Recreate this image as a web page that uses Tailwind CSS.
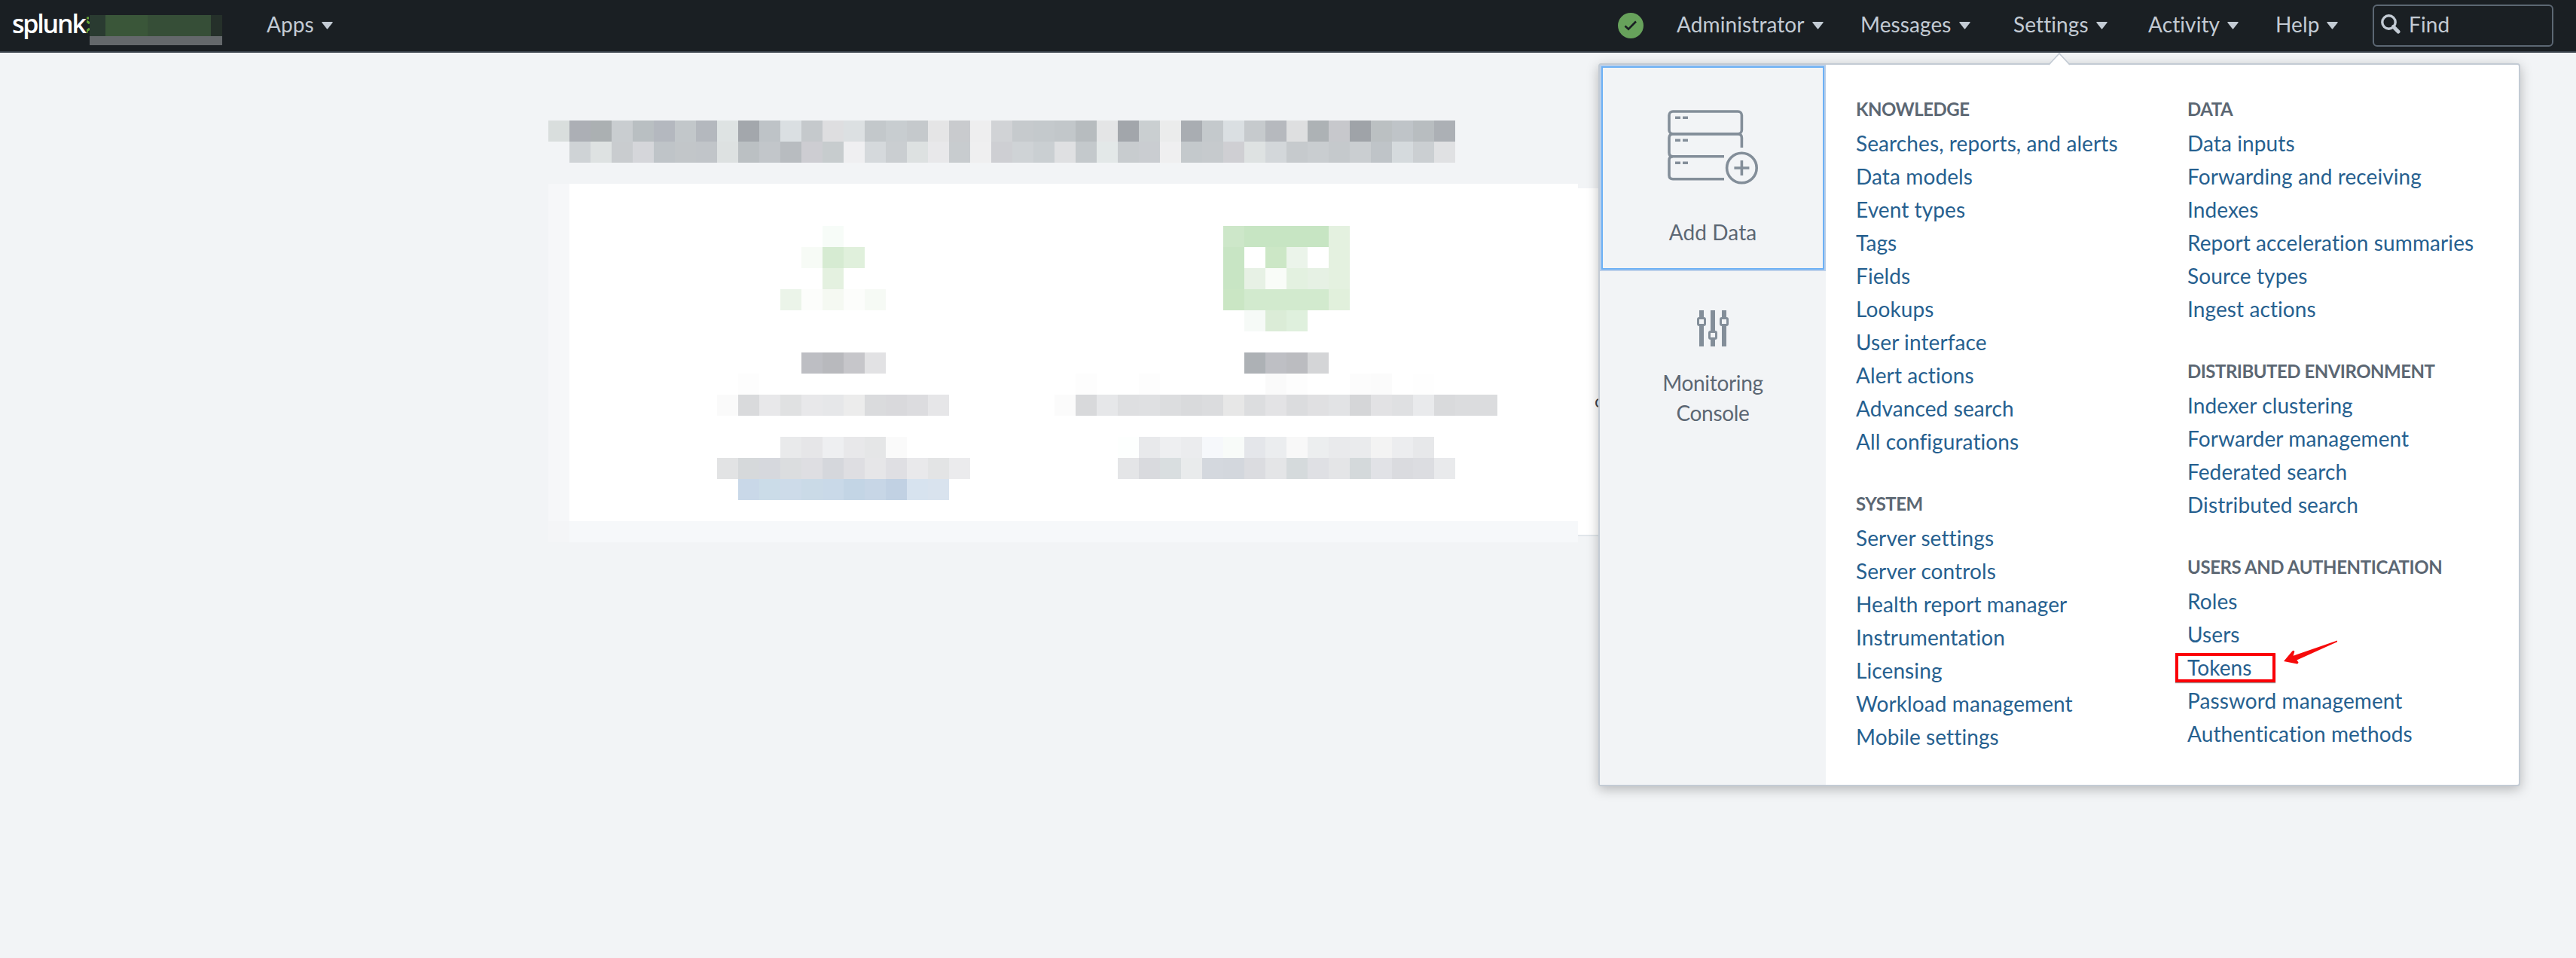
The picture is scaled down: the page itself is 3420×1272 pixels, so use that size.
<!DOCTYPE html>
<html lang="en">
<head>
  <meta charset="UTF-8" />
  <meta name="viewport" content="width=device-width, initial-scale=1.0" />
  <title>Splunk</title>
  <script src="https://cdn.jsdelivr.net/npm/@tailwindcss/browser@4"></script>
</head>
<body class="relative h-[1272px] overflow-hidden bg-[#f2f4f6] font-['Lato','Liberation_Sans',sans-serif] text-[28px] tracking-[0.1px] [font-variant-ligatures:none]">

  <!-- Top bar -->
  <header class="flex h-[70px] items-center border-b-2 border-[#3c444d] bg-[#1a1f23] pl-4 leading-[64px] text-[#c3cbd4]">
    <div class="flex w-[338px] shrink-0 items-start">
      <span class="w-[99px] font-['Open_Sans',sans-serif] text-[34px] leading-[62px] font-semibold tracking-[-2.200px] text-white">splunk</span>
      <svg class="mt-[21px] h-6 w-1" viewBox="0 0 4 24" fill="none" stroke="#65a637" stroke-width="3"><path d="M0 3h3M0 7l4 3M4 17l-4 3v3" /></svg>
      <div class="mt-5 h-[48px] w-44">
        <div class="flex h-7">
          <div class="w-[21px] bg-[#2a3b31]"></div>
          <div class="w-14 bg-[#3a5639]"></div>
          <div class="w-[84px] bg-[#364e37]"></div>
          <div class="w-[15px] bg-[#25302a]"></div>
        </div>
        <div class="h-3 bg-[#64686b]"></div>
      </div>
    </div>
    <nav class="flex w-[1794px] shrink-0">
      <a class="flex items-center gap-[10px]"><span class="-mt-1">Apps</span><svg class="h-[10px] w-[15px]" viewBox="0 0 15 10" fill="currentColor"><path d="M1 0h13q1.400 0 .6 1L8.300 9q-.8 1-1.600 0L.4 1Q-.4 0 1 0z" /></svg></a>
    </nav>
    <nav class="flex shrink-0 items-center">
      <svg class="mr-[44px] h-[34px] w-[34px]" viewBox="0 0 34 34"><circle cx="17" cy="17" r="17" fill="#67a25b" /><path d="M9.500 17.500l4.500 4.200L24 11.500" fill="none" stroke="#1a1f23" stroke-width="2.600" /></svg>
      <a class="flex w-[244px] items-center gap-[10px]"><span class="-mt-1">Administrator</span><svg class="h-[10px] w-[15px]" viewBox="0 0 15 10" fill="currentColor"><path d="M1 0h13q1.400 0 .6 1L8.300 9q-.8 1-1.600 0L.4 1Q-.4 0 1 0z" /></svg></a>
      <a class="flex w-[203px] items-center gap-[10px]"><span class="-mt-1">Messages</span><svg class="h-[10px] w-[15px]" viewBox="0 0 15 10" fill="currentColor"><path d="M1 0h13q1.400 0 .6 1L8.300 9q-.8 1-1.600 0L.4 1Q-.4 0 1 0z" /></svg></a>
      <a class="flex w-[179px] items-center gap-[10px]"><span class="-mt-1">Settings</span><svg class="h-[10px] w-[15px]" viewBox="0 0 15 10" fill="currentColor"><path d="M1 0h13q1.400 0 .6 1L8.300 9q-.8 1-1.600 0L.4 1Q-.4 0 1 0z" /></svg></a>
      <a class="flex w-[169px] items-center gap-[10px]"><span class="-mt-1">Activity</span><svg class="h-[10px] w-[15px]" viewBox="0 0 15 10" fill="currentColor"><path d="M1 0h13q1.400 0 .6 1L8.300 9q-.8 1-1.600 0L.4 1Q-.4 0 1 0z" /></svg></a>
      <a class="flex w-[129px] items-center gap-[10px]"><span class="-mt-1">Help</span><svg class="h-[10px] w-[15px]" viewBox="0 0 15 10" fill="currentColor"><path d="M1 0h13q1.400 0 .6 1L8.300 9q-.8 1-1.600 0L.4 1Q-.4 0 1 0z" /></svg></a>
      <div class="flex h-14 w-[240px] items-center gap-[11px] rounded-md border-2 border-[#5c6773] pl-[9px]">
        <svg class="mb-1 h-[26px] w-[26px]" viewBox="0 0 26 26" fill="none" stroke="currentColor"><circle cx="10.500" cy="10.500" r="8.700" stroke-width="3.400" /><path d="M16.500 16.500l6.500 6.500" stroke-width="5" stroke-linecap="round" /></svg>
        <span class="-mt-1">Find</span>
      </div>
    </nav>
  </header>

  <main class="pt-[90px] pl-[728px]">
    <div id="title-blocks" class="grid h-14 grid-cols-[repeat(43,28px)] grid-rows-[repeat(2,28px)]"></div>
    <div class="mt-7 flex">
      <div class="w-7">
        <div class="h-[448px] bg-[#f6f7f9]"></div>
        <div class="h-7 bg-[#f4f5f7]"></div>
      </div>
      <div class="w-[1339px]">
        <div id="card-blocks" class="grid h-[448px] grid-cols-[repeat(47,28px)] grid-rows-[repeat(16,28px)] bg-white"></div>
        <div class="h-7 bg-[#f6f8fa]"></div>
      </div>
      <div class="mt-1.5 h-[462px] w-20 border-b-2 border-[#e1e6eb] bg-white pt-[266px] pl-[22px] text-2xl leading-8 text-[#3c444d]">c</div>
    </div>
  </main>

  <!-- Settings menu -->
  <div class="absolute top-[84px] left-[2122px] flex h-[960px] w-[1224px] rounded-[4px] border-2 border-[#c3cbd4] bg-white shadow-[0_4px_16px_rgba(0,0,0,0.25)]">
    <svg class="absolute -top-4 left-[594px] h-[18px] w-8" viewBox="0 0 32 18"><path d="M1 18L16 2l15 16z" fill="#fff" /><path d="M2 16L16 1l14 15" fill="none" stroke="#c3cbd4" stroke-width="1.600" /></svg>

    <aside class="w-[300px] shrink-0 bg-[#f2f4f6] text-center leading-10 text-[#5c6773]">
      <a class="flex h-[274px] flex-col items-center pt-[60px] shadow-[inset_0_0_0_2px_#b9cfea,inset_0_0_0_4px_#6cb0f5]">
        <svg class="h-[100px] w-[120px]" viewBox="0 0 120 100" fill="none" stroke="#838e99" stroke-width="3.600">
          <rect x="2" y="2" width="96.400" height="29.800" rx="5" />
          <path d="M98.400 50V37q0-5-5-5H7q-5 0-5 5v19.800q0 5 5 5h68" />
          <path d="M75 91.800H7q-5 0-5-5V66.800q0-5 5-5" />
          <path d="M10 10.200h7M20 10.200h7M10 40.200h7M20 40.200h7M10 70.200h7M20 70.200h7" />
          <circle cx="98.400" cy="77" r="19.800" />
          <path d="M88.400 77h20M98.400 67v20" />
        </svg>
        <span class="mt-[42px]">Add Data</span>
      </a>
      <a class="flex flex-col items-center pt-[52px]">
        <svg class="h-12 w-[42px]" viewBox="0 0 42 48" fill="#838e99">
          <path d="M3 0h6v48H3zM18 0h6v48h-6zM33 0h6v48h-6z" />
          <rect y="9" width="12" height="12" rx="3" /><rect x="15" y="27" width="12" height="12" rx="3" /><rect x="30" y="9" width="12" height="12" rx="3" />
          <path d="M3 12h6v6H3zM18 30h6v6h-6zM33 12h6v6h-6z" fill="#f2f4f6" />
        </svg>
        <span class="mt-[28px] tracking-[-0.300px]">Monitoring<br />Console</span>
      </a>
    </aside>

    <div class="flex pt-[43px] pl-10 leading-[44px] whitespace-nowrap text-[#26608f]">
      <div class="flex w-[440px] flex-col gap-[45px]">
        <section>
          <h3 class="mb-[7px] text-2xl leading-8 font-bold tracking-[-0.500px] text-[#5c6773]">KNOWLEDGE</h3>
          <ul>
            <li>Searches, reports, and alerts</li>
            <li>Data models</li>
            <li>Event types</li>
            <li>Tags</li>
            <li>Fields</li>
            <li>Lookups</li>
            <li>User interface</li>
            <li>Alert actions</li>
            <li>Advanced search</li>
            <li>All configurations</li>
          </ul>
        </section>
        <section>
          <h3 class="mb-[7px] text-2xl leading-8 font-bold tracking-[-0.500px] text-[#5c6773]">SYSTEM</h3>
          <ul>
            <li>Server settings</li>
            <li>Server controls</li>
            <li>Health report manager</li>
            <li>Instrumentation</li>
            <li>Licensing</li>
            <li>Workload management</li>
            <li>Mobile settings</li>
          </ul>
        </section>
      </div>
      <div class="flex w-[420px] flex-col gap-[45px]">
        <section>
          <h3 class="mb-[7px] text-2xl leading-8 font-bold tracking-[-0.500px] text-[#5c6773]">DATA</h3>
          <ul>
            <li>Data inputs</li>
            <li>Forwarding and receiving</li>
            <li>Indexes</li>
            <li>Report acceleration summaries</li>
            <li>Source types</li>
            <li>Ingest actions</li>
          </ul>
        </section>
        <section>
          <h3 class="mb-[7px] text-2xl leading-8 font-bold tracking-[-0.500px] text-[#5c6773]">DISTRIBUTED ENVIRONMENT</h3>
          <ul>
            <li>Indexer clustering</li>
            <li>Forwarder management</li>
            <li>Federated search</li>
            <li>Distributed search</li>
          </ul>
        </section>
        <section>
          <h3 class="mb-[7px] text-2xl leading-8 font-bold tracking-[-0.400px] text-[#5c6773]">USERS AND AUTHENTICATION</h3>
          <ul>
            <li>Roles</li>
            <li>Users</li>
            <li>Tokens</li>
            <li>Password management</li>
            <li>Authentication methods</li>
          </ul>
        </section>
      </div>
    </div>
  </div>

  <!-- Callout on Tokens -->
  <div class="absolute top-[867px] left-[2888px] h-[39px] w-[133px] border-4 border-[#fb0007] shadow-[0_1px_1px_rgba(0,0,0,0.4)]"></div>
  <svg class="absolute top-[848px] left-[3030px] h-[36px] w-[76px]" viewBox="0 0 76 36"><path d="M2 30L13.300 16.500q2-1.500 3 .5L14.700 22.700 73 2.600v1.700L19.300 28.600l2 2.400q.6 2-1.500 2.500z" fill="#f60a0b" /></svg>

  <script>
    // [row, first column, colours of the blocks]
    const title = [
      [1, 1, "d9dedd acafb5 abb0b2 c9cdd0 b9bfc2 b4b8bf c2c7ca b4b8be dee3e3 a3a7ac bec3c7 dadfe2 c5c9cc dedee0 dce0e2 c3c8cb c8cdd0 c5c9cc e5e5e6 c9cbce eeeeef d1d3d6 c6cacd c4c9cc c2c7ca b7bcbf e4e5e6 a2a6ab cacfd1 ebecec a9adb2 c4c9cc dadfe2 c6cacd b6b9be dedfe0 adb2b5 c7c8cc 9fa3a8 bbc0c2 bfc4c8 b8bdc0 acb0b5"],
      [2, 2, "cfd3d6 dee2e2 c9cccf d5d6da bfc4c8 c2c6c9 c1c5c9 dde1e1 bbc0c3 c2c6ca b8bcc0 cdcdd2 c7ccce efeff1 d5d9dc caced1 dde1e1 e8e8ea c8cccf efeff0 cecfd3 cfd3d6 cacfd2 dfe0e2 c4c9cc e3e8e8 c8cccf cacdd1 efeff0 c4c9cc c6cacd cfcfd3 dee2e2 d3d7da c6cacd c9cdd0 c5c9cc caced1 bfc4c8 d5dadd cbcfd2 e0e1e3"]
    ];

    const card = [
      [3, 13, "f7fcf8"],
      [3, 32, "cde7c9 c7e5c3 c7e5c3 c7e5c3 c7e5c3 e4f1e0"],
      [4, 12, "f7fbf6 d6ebd2 e0f0dc"],
      [4, 32, "c8e5c4 ffffff cce7c6 ebf4ea ffffff e4f1e0"],
      [5, 13, "e4f1e0"],
      [5, 32, "c8e5c4 e7f1e5 f9fcf8 e3f1e0 e6f1e4 e4f1e0"],
      [6, 11, "ebf4e9 fcfdfb f5f9f2 fcfdfb f6faf5"],
      [6, 32, "cae6c4 d2eace d2eace d2eace d2eace e1f0dc"],
      [7, 33, "f6faf7 dbecd7 dff0dd"],
      [9, 12, "bdbec3 b8b9bd c6c6ca e2e2e4"],
      [9, 33, "adb1b5 bebfc4 bbbcc0 d4d5d7"],
      [10, 9, "fdfdfd"],
      [10, 25, "fdfdfd ffffff ffffff fdfdfd"],
      [10, 34, "fafafa fdfdfd"],
      [10, 38, "fcfcfc fbfbfb ffffff fefefe"],
      [11, 8, "fafafa d9dadc e8e8ea e0e1e2 e8e8ea e6e7e9 ececec dadbdd d9d9dc dcdcdf e6e6e8"],
      [11, 24, "fbfbfb d8d9db e6e7e9 dedfe1 dfe0e2 dcdddf d9dadc dbdcde e7e7e7 dcdddf e3e3e5 dbdcde e0e0e2 e2e3e5 d5d6d8 e2e2e4 dfe0e2 e9eaec d9dadc dbdcde dbdcde"],
      [13, 11, "e9eaeb e6e6e8 eeeff1 e8e8ea e5e6e7 fafafa"],
      [13, 27, "fdfffe e8e9eb eeeff1 ebecee f6f8fb f8fbf9 e4e6ea ebedef f8f8f8 eceeef e9eaec eaebed f3f3f3 ecedef e7e8ea"],
      [14, 8, "e2e3e4 d6d9db d6d8dd dbdddf dedee2 d5d7dc dedee2 e6e6e8 dfdfe3 e9e9eb e3e4e5 ebebed"],
      [14, 27, "e4e5e7 d9dade d9dee0 e9ebec d4d8de d3d7dd dbdce0 e4e5e7 d5dadc dfe0e4 e4e5e7 d4d9db e1e2e6 dadbdf dcdde1 e9eaec"],
      [15, 9, "c9d8e8 cbdce8 cddbe9 cadae7 c9d9e8 c3d5e5 c7d6e6 c1d1e3 d7e3ef d9e3ee"]
    ];

    function drawBlocks(id, runs) {
      const grid = document.getElementById(id);
      runs.forEach(([row, col, colors]) => {
        colors.split(" ").forEach((color, i) => {
          const block = document.createElement("div");
          block.style.gridArea = `${row} / ${col + i}`;
          block.style.backgroundColor = "#" + color;
          grid.appendChild(block);
        });
      });
    }

    drawBlocks("title-blocks", title);
    drawBlocks("card-blocks", card);
  </script>

</body>
</html>
